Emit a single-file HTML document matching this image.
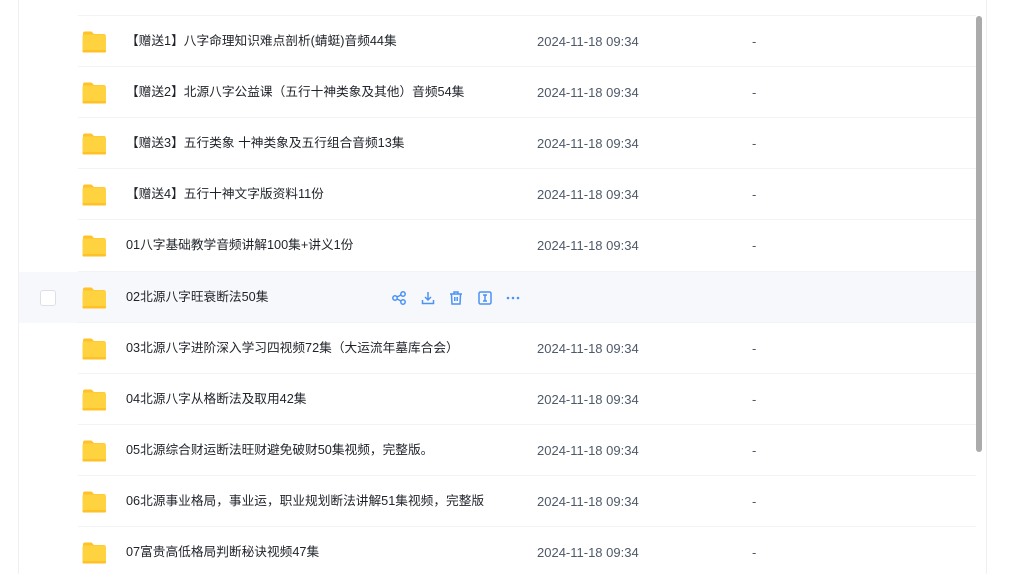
<!DOCTYPE html>
<html><head><meta charset="utf-8"><style>
*{margin:0;padding:0;box-sizing:border-box}
body{width:1024px;height:574px;overflow:hidden;background:#fff;position:relative;font-family:"Liberation Sans","Noto Sans CJK SC",sans-serif;}
.lb{position:absolute;left:18px;top:0;width:1px;height:574px;background:#f0f0f2}
.rb{position:absolute;left:986px;top:0;width:1px;height:574px;background:#f0f0f2}
.sb{position:absolute;left:976px;top:16px;width:6px;height:436px;background:#ababab;border-radius:3px}
.row{position:absolute;left:19px;width:957px;height:51px}
.sep{position:absolute;left:78px;width:898px;height:1px;background:#f2f3f5}
.hov{background:#f7f8fb}
.fd{position:absolute;left:63px;top:15px;width:24px;height:22px}
.nm{position:absolute;left:107px;top:0;line-height:51px;font-size:12.7px;color:#1f2329}
.dt{position:absolute;left:518px;top:0;line-height:51px;font-size:13px;color:#4e5969}
.ds{position:absolute;left:733px;top:0;line-height:51px;font-size:13px;color:#4e5969}
.cb{position:absolute;left:21px;top:18px;width:16px;height:16px;border:1px solid #dcdfe6;border-radius:3px;background:#fff}
.ic{position:absolute;top:18px;width:16px;height:16px}
</style></head><body>
<div class="lb"></div><div class="rb"></div>
<svg width="0" height="0" style="position:absolute"><defs>
<symbol id="f" viewBox="0 0 24 22"><path d="M1 2.5Q1 0.5 3 0.5H9.5L12 3H22Q23.5 3 23.5 4.5V6H1Z" fill="#ffc22a"/><rect x="0.5" y="3.5" width="23.5" height="18" rx="2" fill="#ffd340"/><rect x="0.5" y="19" width="23.5" height="2.5" rx="1" fill="#ffc126"/></symbol>
</defs></svg>
<div id="rows"></div>
<div class="sb"></div>
<script>
var names=["【赠送1】八字命理知识难点剖析(蜻蜓)音频44集","【赠送2】北源八字公益课（五行十神类象及其他）音频54集","【赠送3】五行类象 十神类象及五行组合音频13集","【赠送4】五行十神文字版资料11份","01八字基础教学音频讲解100集+讲义1份","02北源八字旺衰断法50集","03北源八字进阶深入学习四视频72集（大运流年墓库合会）","04北源八字从格断法及取用42集","05北源综合财运断法旺财避免破财50集视频，完整版。","06北源事业格局，事业运，职业规划断法讲解51集视频，完整版","07富贵高低格局判断秘诀视频47集"];
var h="";
for(var i=0;i<11;i++){
 var y=15+i*51.1;
 h+='<div class="sep" style="top:'+y+'px"></div>';
 h+='<div class="row'+(i==5?' hov':'')+'" style="top:'+(y+1)+'px">';
 h+='<svg class="fd"><use href="#f"/></svg><div class="nm">'+names[i]+'</div>';
 if(i==5){
  h+='<div class="cb"></div>';
  var c='#4b93f5';
  h+='<svg class="ic" style="left:372px" viewBox="0 0 16 16" fill="none" stroke="'+c+'" stroke-width="1.5"><circle cx="4" cy="8" r="2.2"/><circle cx="12" cy="4" r="2.2"/><circle cx="12" cy="12" r="2.2"/><path d="M6 7L10 5M6 9L10 11"/></svg>';
  h+='<svg class="ic" style="left:401px" viewBox="0 0 16 16" fill="none" stroke="'+c+'" stroke-width="1.5"><path d="M8 2V10M5 7L8 10L11 7M2.5 10V13.5H13.5V10"/></svg>';
  h+='<svg class="ic" style="left:429px" viewBox="0 0 16 16" fill="none" stroke="'+c+'" stroke-width="1.5"><path d="M2 4H14M6 4V2H10V4M3.5 4.5L4 14H12L12.5 4.5M6.8 7V11M9.2 7V11"/></svg>';
  h+='<svg class="ic" style="left:458px" viewBox="0 0 16 16" fill="none" stroke="'+c+'" stroke-width="1.5"><rect x="2" y="2" width="12" height="12" rx="1.5"/><path d="M6 5H10M8 5V11M6 11H10"/></svg>';
  h+='<svg class="ic" style="left:486px" viewBox="0 0 16 16" fill="'+c+'"><circle cx="3" cy="8" r="1.3"/><circle cx="8" cy="8" r="1.3"/><circle cx="13" cy="8" r="1.3"/></svg>';
 } else {
  h+='<div class="dt">2024-11-18 09:34</div><div class="ds">-</div>';
 }
 h+='</div>';
}
document.getElementById('rows').innerHTML=h;
</script>
</body></html>
